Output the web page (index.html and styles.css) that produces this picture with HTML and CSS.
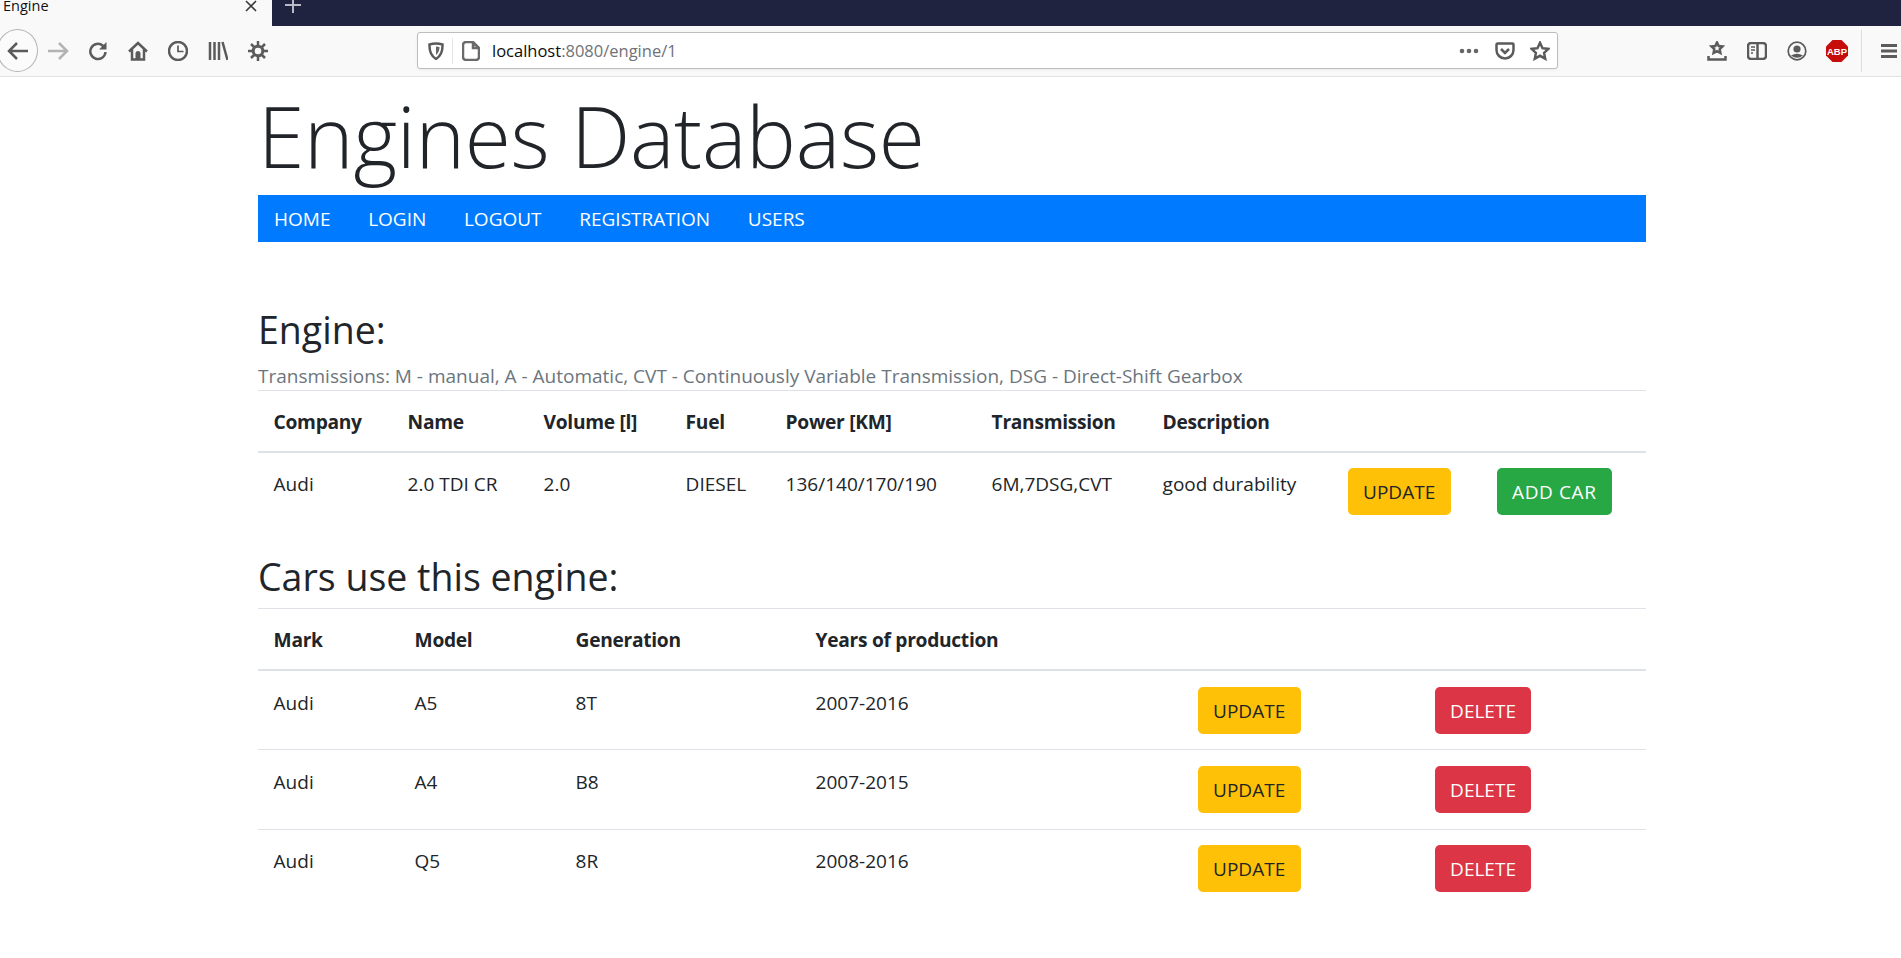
FILE: index.html

```html
<!DOCTYPE html>
<html lang="en">
<head>
  <meta charset="UTF-8" />
  <title>Engine</title>
  <link rel="stylesheet" href="styles.css">
</head>
<body>
  <div class="tabstrip">
    <div class="tab">
      <span class="tab-title">Engine</span>
      <svg class="tab-close" width="14" height="14" viewBox="0 0 14 14"><path d="M2 2l10 10M12 2L2 12" stroke="#3a3a3a" stroke-width="1.6" fill="none"/></svg>
    </div>
    <svg class="tab-new" width="18" height="18" viewBox="0 0 18 18"><path d="M9 1v16M1 9h16" stroke="#b9bac6" stroke-width="2" fill="none"/></svg>
  </div>

  <div class="toolbar">
    <div class="tool back">
      <svg width="22" height="20" viewBox="0 0 22 20"><path d="M21 10H2.500M10 2l-8 8 8 8" class="ico"/></svg>
    </div>
    <div class="tool">
      <svg width="22" height="20" viewBox="0 0 22 20"><path d="M1 10h18.500M12 2l8 8-8 8" class="ico faded"/></svg>
    </div>
    <div class="tool">
      <svg width="20" height="20" viewBox="0 0 20 20"><path d="M17.500 11a7.600 7.600 0 1 1-2.600-6.300L17 7" class="ico"/><path d="M18.500 1v7.500h-7.500z" fill="#5b5b5c"/></svg>
    </div>
    <div class="tool">
      <svg width="20" height="20" viewBox="0 0 20 20"><path d="M1 10.500l9-8.500 9 8.500M4 8.500V18.500h12V8.500" class="ico"/><path d="M7.500 12.500a2.500 2.500 0 0 1 5 0V18.500h-5z" fill="#5b5b5c"/></svg>
    </div>
    <div class="tool">
      <svg width="20" height="20" viewBox="0 0 20 20"><circle cx="10" cy="10" r="9" class="ico"/><path d="M10 4.500v6h5.500" class="ico thin"/></svg>
    </div>
    <div class="tool">
      <svg width="20" height="20" viewBox="0 0 20 20"><path d="M2 1v18M6.500 1v18M11 1v18M14.500 1l5 18" class="ico"/></svg>
    </div>
    <div class="tool">
      <svg width="20" height="20" viewBox="0 0 20 20"><circle cx="10" cy="10" r="4.800" class="ico heavy"/><path d="M10 0v4.500M10 15.500V20M0 10h4.500M15.500 10H20M3 3l3 3M14 14l3 3M17 3l-3 3M6 14l-3 3" class="ico"/></svg>
    </div>

    <div class="urlbar">
      <svg class="url-shield" width="16" height="18" viewBox="0 0 16 18"><path d="M1.500 2.500Q8 .500 14.500 2.500C14.800 9 13 14 8 17 3 14 1.200 9 1.500 2.500z" class="ico"/><path d="M8 4.500q2 0 3.500.5C11.500 8 10.500 11 8 13z" fill="#666"/></svg>
      <span class="url-sep"></span>
      <svg class="url-page" width="18" height="20" viewBox="0 0 18 20"><path d="M4 1h7l6 6v9a3 3 0 0 1-3 3H4a3 3 0 0 1-3-3V4a3 3 0 0 1 3-3zM11 1v6h6" class="ico page"/></svg>
      <span class="url-text">localhost<span class="url-dim">:8080/engine/1</span></span>
      <svg class="url-dots" width="20" height="6" viewBox="0 0 20 6"><circle cx="3" cy="3" r="2.300"/><circle cx="10" cy="3" r="2.300"/><circle cx="17" cy="3" r="2.300"/></svg>
      <svg class="url-pocket" width="20" height="18" viewBox="0 0 20 18"><path d="M2.500 1.500h15a1 1 0 0 1 1 1V8a8.500 8.500 0 0 1-17 0V2.500a1 1 0 0 1 1-1z" class="ico"/><path d="M6 7l4 4 4-4" class="ico"/></svg>
      <svg class="url-star" width="20" height="20" viewBox="0 0 20 20"><path d="M10 1.800l2.500 5.400 5.900.7-4.300 4 1.100 5.800-5.200-2.900-5.200 2.900 1.100-5.800-4.300-4 5.900-.7z" class="ico"/></svg>
    </div>

    <div class="tools-right">
      <div class="tool">
        <svg width="20" height="20" viewBox="0 0 20 20"><path d="M10 1.500l1.700 3.500 3.800.5-2.800 2.700.7 3.800-3.400-1.800-3.400 1.800.7-3.800-2.800-2.700 3.800-.5zM1.500 15v3.500h17V15" class="ico"/></svg>
      </div>
      <div class="tool">
        <svg width="20" height="18" viewBox="0 0 20 18"><rect x="1" y="1" width="18" height="16" rx="3" class="ico"/><path d="M10.500 1v16" class="ico"/><path d="M4 5h4M4 8h4M4 11h2" class="ico thin"/></svg>
      </div>
      <div class="tool">
        <svg width="20" height="20" viewBox="0 0 20 20"><circle cx="10" cy="10" r="8.800" class="ico thin"/><circle cx="10" cy="8" r="3.600" fill="#5b5b5c"/><path d="M4 14.500q6-3.500 12 0-6 4.500-12 0z" fill="#5b5b5c"/></svg>
      </div>
      <div class="tool">
        <svg width="22" height="22" viewBox="0 0 22 22"><path d="M6.500 0h9L22 6.500v9L15.500 22h-9L0 15.500v-9z" fill="#c70d0c"/><text x="11" y="15" class="abp">ABP</text></svg>
      </div>
      <span class="tool-sep"></span>
      <svg class="burger" width="16" height="14" viewBox="0 0 16 14"><path d="M0 1.500h16M0 7h16M0 12.500h16" class="ico bar"/></svg>
    </div>
  </div>

  <div class="container">
    <h1 class="site-title">Engines Database</h1>
    <nav class="navbar">
      <a href="#">HOME</a>
      <a href="#">LOGIN</a>
      <a href="#">LOGOUT</a>
      <a href="#">REGISTRATION</a>
      <a href="#">USERS</a>
    </nav>

    <h3 class="engine-title">Engine:</h3>
    <p class="muted">Transmissions: M - manual, A - Automatic, CVT - Continuously Variable Transmission, DSG - Direct-Shift Gearbox</p>
    <table class="table engine-table">
      <colgroup>
        <col class="c134"><col class="c136"><col class="c142"><col class="c100"><col class="c206"><col class="c171"><col class="c185"><col class="c149"><col>
      </colgroup>
      <thead>
        <tr><th>Company</th><th>Name</th><th>Volume [l]</th><th>Fuel</th><th>Power [KM]</th><th>Transmission</th><th>Description</th><th></th><th></th></tr>
      </thead>
      <tbody>
        <tr>
          <td>Audi</td><td>2.0 TDI CR</td><td>2.0</td><td>DIESEL</td><td>136/140/170/190</td><td>6M,7DSG,CVT</td><td>good durability</td>
          <td><a class="btn btn-warning" href="#">UPDATE</a></td>
          <td><a class="btn btn-success" href="#">ADD CAR</a></td>
        </tr>
      </tbody>
    </table>

    <h3 class="cars-title">Cars use this engine:</h3>
    <table class="table cars-table">
      <colgroup>
        <col class="c141"><col class="c161"><col class="c240"><col class="c382"><col class="c237"><col>
      </colgroup>
      <thead>
        <tr><th>Mark</th><th>Model</th><th>Generation</th><th>Years of production</th><th></th><th></th></tr>
      </thead>
      <tbody>
        <tr>
          <td>Audi</td><td>A5</td><td>8T</td><td>2007-2016</td>
          <td><a class="btn btn-warning" href="#">UPDATE</a></td>
          <td><a class="btn btn-danger" href="#">DELETE</a></td>
        </tr>
        <tr>
          <td>Audi</td><td>A4</td><td>B8</td><td>2007-2015</td>
          <td><a class="btn btn-warning" href="#">UPDATE</a></td>
          <td><a class="btn btn-danger" href="#">DELETE</a></td>
        </tr>
        <tr>
          <td>Audi</td><td>Q5</td><td>8R</td><td>2008-2016</td>
          <td><a class="btn btn-warning" href="#">UPDATE</a></td>
          <td><a class="btn btn-danger" href="#">DELETE</a></td>
        </tr>
      </tbody>
    </table>
  </div>
</body>
</html>
```

FILE: styles.css

```css
* { box-sizing: border-box; }
body { margin: 0; background: white; color: #212529; font-family: "Open Sans", "Noto Sans", sans-serif; font-size: 19px; overflow: hidden; }

/* browser chrome */
.tabstrip { display: flex; height: 26px; background: #202340; overflow: hidden; }
.tab { display: flex; justify-content: space-between; width: 272px; height: 26px; padding: 0 14px 0 3px; background: #f9f9fa; }
.tab-title { font-size: 14.500px; line-height: 12px; color: #111; }
.tab-close { margin-top: -1px; }
.tab-new { margin: -4px 0 0 12px; }

.toolbar { display: flex; align-items: center; height: 51px; padding-bottom: 1px; background: #f9f9fa; border-bottom: 1px solid #e2e2e4; }
.tool { display: flex; align-items: center; justify-content: center; width: 40px; height: 40px; flex: none; }
.back { margin-left: -3px; border: 1px solid #b4b4b6; border-radius: 50%; background: #fbfbfb; width: 41px; height: 43px; }
.ico { fill: none; stroke: #5b5b5c; stroke-width: 2.500; }
.ico.thin { stroke-width: 1.700; }
.ico.heavy { stroke-width: 3; }
.ico.bar { stroke-width: 3; }
.ico.faded { stroke: #b3b3b4; }
.ico.page { stroke: #6a6a6a; }

.urlbar { display: flex; align-items: center; width: 1141px; height: 37px; margin-left: 139px; background: white; border: 1px solid #bdbdbd; border-radius: 3px; box-shadow: 0 1px 3px rgba(0,0,0,0.06); flex: none; }
.url-shield { margin-left: 10px; }
.url-sep { width: 1px; height: 26px; margin: 0 9px 0 8px; background: #e6e6e6; }
.url-page { margin-right: 12px; }
.url-text { font-size: 16.500px; color: #0c0c0d; }
.url-dim { color: #6f7278; }
.url-dots { margin-left: auto; fill: #666; }
.url-pocket { margin-left: 16px; }
.url-star { margin: 0 7px 0 15px; }

.tools-right { display: flex; align-items: center; margin-left: 139px; }
.tool-sep { width: 1px; height: 42px; margin-left: 4px; background: #dcdcde; }
.burger { margin-left: 19px; }
.abp { font-family: "Liberation Sans", sans-serif; font-size: 9.500px; font-weight: bold; fill: white; text-anchor: middle; }

/* page */
.container { width: 1388px; margin-left: 258px; }
.site-title { margin: 0; height: 118px; font-size: 84px; font-weight: 300; line-height: 118px; letter-spacing: -0.3px; }
.navbar { display: flex; gap: 37.700px; height: 47px; padding: 0 16px; align-items: center; background: #007bff; }
.navbar a { color: white; text-decoration: none; }

h3 { margin: 0; font-size: 37.500px; font-weight: 400; line-height: 43px; }
.engine-title { margin-top: 66px; }
.muted { margin: 0; height: 39px; padding-top: 11px; line-height: 29px; color: #6c757d; white-space: nowrap; }

.table { width: 100%; border-collapse: collapse; table-layout: fixed; }
.table th { height: 62px; padding: 2px 15.600px 0; text-align: left; font-weight: 700; font-size: 19.200px; letter-spacing: -0.3px; border-top: 1px solid #dee2e6; border-bottom: 2px solid #dee2e6; }
.engine-table th { height: 61px; }
.table td { height: 79px; padding: 15.600px; vertical-align: top; line-height: 33px; white-space: nowrap; }
.cars-table td { border-bottom: 1px solid #dee2e6; }
.cars-table tr:last-child td { border-bottom: none; }

.cars-title { margin-top: 24px; height: 53px; }

.c100 { width: 100px; } .c134 { width: 134px; } .c136 { width: 136px; } .c141 { width: 141px; }
.c142 { width: 142px; } .c149 { width: 149px; } .c161 { width: 161px; } .c171 { width: 171px; }
.c185 { width: 185px; } .c206 { width: 206px; } .c237 { width: 237px; } .c240 { width: 240px; }
.c382 { width: 382px; }

.btn { display: inline-block; height: 47px; padding: 0 15.500px; border-radius: 5px; line-height: 49px; text-decoration: none; vertical-align: top; }
.btn-warning { background: #ffc107; color: #212529; }
.btn-success { background: #28a745; color: white; letter-spacing: 0.6px; }
.btn-danger { background: #dc3545; color: white; }
```
